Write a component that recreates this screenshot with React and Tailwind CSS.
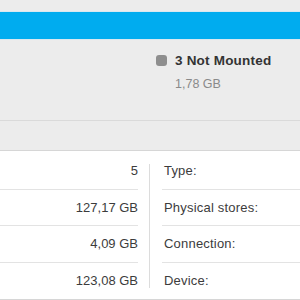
const rows = [
  { value: "5", label: "Type:" },
  { value: "127,17 GB", label: "Physical stores:" },
  { value: "4,09 GB", label: "Connection:" },
  { value: "123,08 GB", label: "Device:" },
];

export default function App() {
  return (
    <div className="h-[300px] w-[300px] overflow-hidden bg-[#ececec] font-['Liberation_Sans',Arial,sans-serif] text-[13px]">
      <div className="h-[11px]" />
      <div className="h-[29px] border-y border-[#d8e8f0] bg-[#00acef]" />
      <div className="flex h-[80px] pl-[156px] pt-[15px]">
        <div className="h-[11px] w-[11px] rounded-[3px] bg-[#8e8e8e]" />
        <div className="ml-[8px] flex flex-col">
          <span className="-mt-[1px] text-[13.5px] leading-[13px] font-bold tracking-[0.2px] text-[#333]">3 Not Mounted</span>
          <span className="mt-[10px] text-[12.5px] leading-[14px] text-[#8a8a8a]">1,78 GB</span>
        </div>
      </div>
      <div className="h-[30px] border-t border-[#dadada]" />
      <div className="flex border-t border-[#d6d6d6] bg-white pt-[2px] text-[#3c3c3c]">
        <div className="w-[138px]">
          {rows.map((row, i) => (
            <div
              key={row.value}
              className={`flex h-[36.5px] items-center justify-end ${i < rows.length - 1 ? "border-b border-[#e3e3e3]" : ""}`}
            >
              {row.value}
            </div>
          ))}
        </div>
        <div className="mx-[11px] my-[11px] w-px bg-[#dcdcdc]" />
        <div className="ml-[1px] flex-1">
          {rows.map((row, i) => (
            <div
              key={row.label}
              className={`flex h-[36.5px] items-center pl-[2px] tracking-[0.2px] ${i < rows.length - 1 ? "border-b border-[#e3e3e3]" : ""}`}
            >
              {row.label}
            </div>
          ))}
        </div>
      </div>
      <div className="h-[10px] border-t border-[#d6d6d6] bg-[#ececec]" />
    </div>
  );
}
